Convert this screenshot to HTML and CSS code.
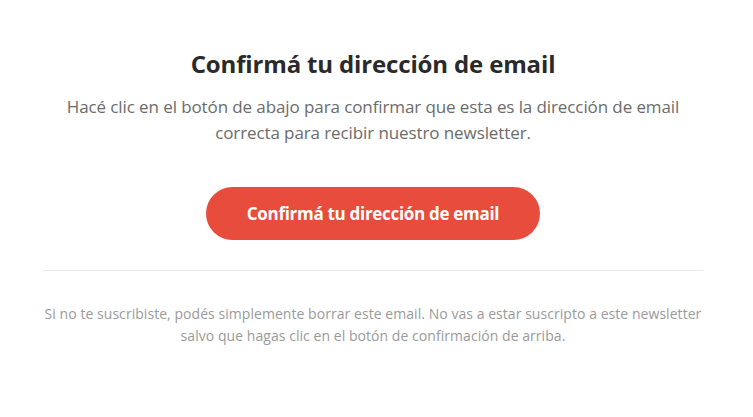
FILE: index.html
```html
<!DOCTYPE html>
<html lang="es">
<head>
<meta charset="utf-8">
<link rel="stylesheet" href="styles.css">
</head>
<body>
<main class="card">
  <h1 class="title">Confirmá tu dirección de email</h1>
  <p class="lead">Hacé clic en el botón de abajo para confirmar que esta es la dirección de email correcta para recibir nuestro newsletter.</p>
  <div class="action"><a class="btn" href="#">Confirmá tu dirección de email</a></div>
  <hr class="divider">
  <p class="note">Si no te suscribiste, podés simplemente borrar este email. No vas a estar suscripto a este newsletter salvo que hagas clic en el botón de confirmación de arriba.</p>
</main>
</body>
</html>
```
FILE: styles.css
```css
html, body { margin: 0; padding: 0; background: #fff; }
body { font-family: "Open Sans", "Noto Sans", sans-serif; }
.card { width: 660px; margin: 0 0 0 43px; padding-top: 47px; text-align: center; }
.title { margin: 0; font-size: 24px; line-height: 34px; font-weight: 700; color: #2a2a2a; letter-spacing: -0.15px; }
.lead { margin: 13px 20px 0; font-size: 17px; line-height: 26px; color: #6b6b6b; letter-spacing: -0.1px; }
.action { margin-top: 41px; display: flex; justify-content: center; }
.btn { display: block; width: 334px; height: 53px; line-height: 53px; border-radius: 27px; background: #e74c3c; color: #fff; font-weight: 700; font-size: 17px; text-decoration: none; letter-spacing: -0.3px; }
.divider { margin: 30px 0 0; border: 0; border-top: 1px solid #e8e8e8; }
.note { margin: 32px 0 0; font-size: 14px; line-height: 22px; color: #9a9a9a; letter-spacing: 0.05px; }
```
